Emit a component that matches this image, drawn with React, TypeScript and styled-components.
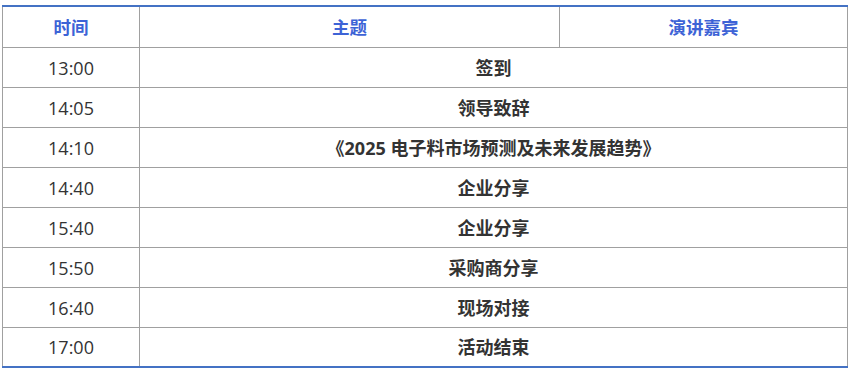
import React from "react";
import styled, { createGlobalStyle } from "styled-components";

const Global = createGlobalStyle`
  html, body { margin: 0; padding: 0; background: #fff; }
  body { font-family: "Open Sans", "Noto Sans CJK SC", sans-serif; }
`;

const Wrap = styled.div`
  padding: 5px 3px 0 2px;
`;

const Table = styled.table`
  width: 846px;
  border-collapse: collapse;
  table-layout: fixed;
  border-top: 2px solid #4472c4;
  border-bottom: 2px solid #4472c4;
`;

const Th = styled.th<{ $w?: number }>`
  width: ${(p) => (p.$w ? `${p.$w}px` : "auto")};
  height: 40px;
  padding: 0;
  border-left: 1px solid #a0a0a0;
  border-right: 1px solid #a0a0a0;
  border-bottom: 1px solid #a0a0a0;
  color: #3d63d6;
  font-size: 17.5px;
  font-weight: 700;
  line-height: 20px;
  text-align: center;
  vertical-align: middle;
`;

const Td = styled.td<{ $bold?: boolean }>`
  height: 39px;
  padding: 0;
  border: 1px solid #a0a0a0;
  color: #333;
  font-size: 18px;
  font-weight: ${(p) => (p.$bold ? 700 : 400)};
  text-align: center;
  vertical-align: middle;
  line-height: 20px;
  tr:last-child > & {
    border-bottom: none;
    height: 38px;
  }
`;

const rows: [string, string][] = [
  ["13:00", "签到"],
  ["14:05", "领导致辞"],
  ["14:10", "《2025 电子料市场预测及未来发展趋势》"],
  ["14:40", "企业分享"],
  ["15:40", "企业分享"],
  ["15:50", "采购商分享"],
  ["16:40", "现场对接"],
  ["17:00", "活动结束"],
];

export default function App() {
  return (
    <Wrap>
      <Global />
      <Table>
        <thead>
          <tr>
            <Th $w={136}>时间</Th>
            <Th $w={419}>主题</Th>
            <Th>演讲嘉宾</Th>
          </tr>
        </thead>
        <tbody>
          {rows.map(([t, s], i) => (
            <tr key={i}>
              <Td>{t}</Td>
              <Td colSpan={2} $bold>
                {s}
              </Td>
            </tr>
          ))}
        </tbody>
      </Table>
    </Wrap>
  );
}
